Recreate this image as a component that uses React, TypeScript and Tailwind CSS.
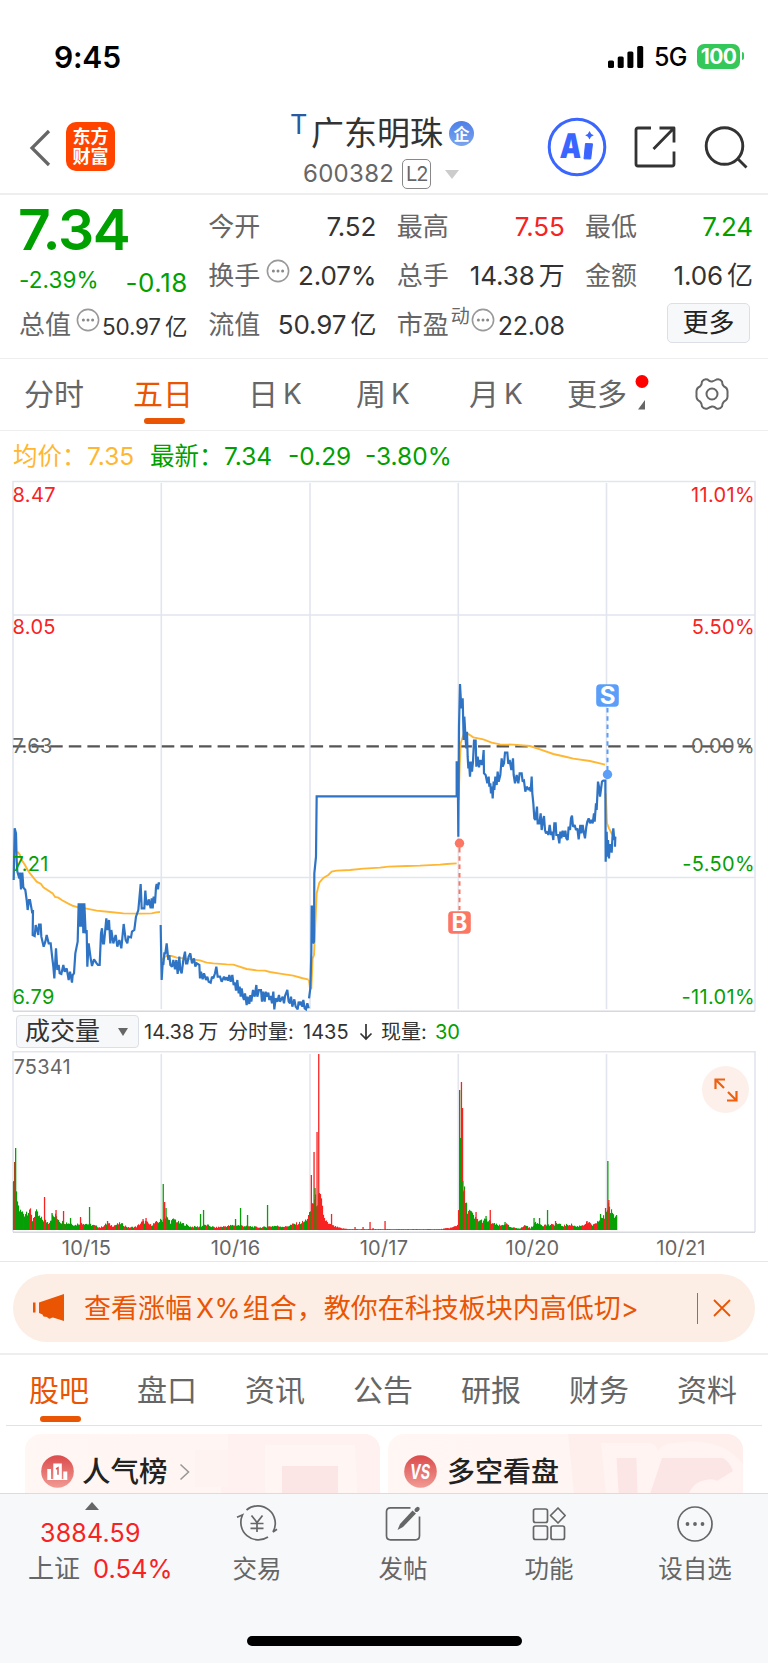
import type { ReactNode } from "react";

const BLUE = "#2f74c4";
const AMBER = "#ffb733";
const RED = "#f82222";
const GREEN = "#06a006";

// Points are kept in thirds of a pixel, relative to each series' own origin.
const priceEarly = [
  "41,240 44,85 48,100 50,180 52,215 58,235 60,218 63,268 67,218 70,262 76,270 80,300 83,330 87,300 90,300 97,340 99,330 98,405 104,408 107,375 110,385 115,405 117,374 122,374 124,410 131,440 136,425 140,405 146,430 152,430 157,475 160,500 163,535 168,445 172,510 176,495 179,520 184,522 190,495 194,515 200,505 206,540 210,515 216,548 218,525 222,520 226,460 233,425 236,310 240,380 242,310 245,380 248,310 250,400 253,310 257,400 260,390 262,500 266,430 272,475 276,498 282,478 290,490 294,495 299,495 303,400 306,385 309,430 312,430 319,355 322,390 327,360 331,430 334,390 340,430 347,405 352,440 358,420 364,445 371,372 377,420 382,430 385,410 393,412 396,395 403,390 408,350 415,330 422,252 425,325 431,325 433,325 436,272 439,310 443,315 446,298 449,310 452,325 455,295 458,325 461,290 465,310 468,262 470,252 474,268 476,250 480,250",
  "482,375 485,540 488,490 490,495 493,460 496,460 500,430 505,480 508,465 511,495 516,500 520,480 525,508 529,480 533,522 538,470 541,510 545,520 550,480 555,455 558,490 562,490 566,470 571,460 576,490 582,475 586,500 590,490 598,495 600,535 603,515 608,538 612,520 618,540 622,530 626,545 632,548 636,530 640,535 645,520 649,500 653,530 660,530 665,545 672,530 676,540 680,532 684,542 688,525 692,545 697,525 701,555 705,548 708,572 712,540 716,580 719,560 722,590 725,565 729,590 732,600 735,580 740,615 743,590 748,612 751,585 754,605 759,570 764,590 769,555 772,590 777,570 783,570 786,605 789,575 794,605 797,575 801,590 805,578 808,600 812,588 816,610 820,575 823,628 827,595 832,605 837,585 840,605 848,590 852,610 855,588 862,570 866,605 870,610 873,590 877,620 883,598 887,620 893,628 896,605 900,615 903,605 907,620 910,600 914,625 918,628 922,610 926,625",
];

const priceLate = [
  "27,1015 31,985 34,880 35,740 38,740 39,850 42,845 43,640 48,590 50,409 470,409 470,307 473,307 475,530 477,200 480,72 484,145 488,115 491,240 493,170 497,240 499,265 501,215 503,290 505,325 507,305 510,350 513,305 516,335 519,305 522,242 527,242 529,320 533,290 537,322 541,300 546,315 548,305 551,270 552,340 557,345 562,370 566,350 568,380 571,370 573,400 576,380 578,415 581,365 583,390 586,350 590,375 593,335 596,365 601,345 605,295 608,320 612,310 615,278 622,278 625,312 629,300 634,330 639,295 641,345 645,370 650,345 655,370 659,340 665,340 668,365 672,362 676,395 680,380 686,390 690,382 692,395 695,350 697,400 700,430 703,475 706,480 711,440 713,490 718,490 722,460 725,510 729,480 732,468 735,510 738,520 742,515 745,525 749,495 753,525 756,515 760,540 763,490 767,490 769,525 774,525 778,550 781,515 784,535 788,512 792,530 796,512 799,535 803,540 806,500 810,510 813,475 816,467 819,500 824,495 828,510 832,505 836,538 841,495 844,520 848,495 851,515 855,535 859,500 862,485 866,475 870,490 874,480 878,490 882,460 884,485 888,430 890,450 894,365 897,380 900,410 906,365 910,362 916,362 917,605 920,515 922,590 924,540 927,595 929,555 933,555 935,578 938,520 940,505 943,540 946,530 945,560",
];

const avgEarly = [
  "52,155 60,165 65,180 75,195 83,210 90,220 100,233 110,245 123,252 130,262 158,280 165,291 175,293 185,300 205,311 220,318 235,322 260,326 290,332 330,336 370,340 420,341 455,340 468,337 480,336",
  "487,480 492,472 500,468 515,468 530,473 560,476 600,481 620,488 640,490 680,493 700,494 740,507 770,511 795,512 810,516 840,521 880,527 905,534 926,539",
];

const avgLate = [
  "27,960 30,985 34,985 38,895 42,885 46,790 50,700 58,668 70,654 85,645 95,635 110,632 150,630 190,626 240,623 265,620 320,618 360,617 420,614 440,612 470,610",
  "476,420 479,320 482,250 490,225 505,222 520,232 550,238 575,248 600,253 640,254 690,258 720,268 760,282 800,291 820,296 870,303 915,314",
  "917,400 921,490 927,505 935,520 940,515",
];

// [x, height] of the volume outline, linearly joined between entries
const volumeShape: [number, number][] = [
  [13, 48], [17, 36], [18, 28], [20, 22], [24, 20], [29, 26], [32, 12], [35, 22], [40, 14], [48, 9], [52, 16],
  [56, 17], [60, 10], [70, 8], [75, 6], [80, 9], [84, 8], [92, 6], [100, 3], [107, 8], [112, 5], [120, 8],
  [128, 3], [136, 4], [141, 9], [145, 10], [150, 6], [158, 10], [161, 12], [166, 15], [170, 10], [174, 13],
  [178, 9], [184, 7], [190, 4], [198, 4], [206, 6], [215, 3], [228, 5], [235, 6], [252, 4], [260, 3], [274, 5],
  [285, 4], [293, 7], [298, 8], [304, 10], [309, 18], [312, 34], [320, 38], [324, 14], [328, 7], [335, 4],
  [341, 2], [350, 1], [440, 1], [452, 3], [457, 6], [459, 45], [464, 44], [466, 28], [468, 24], [471, 20],
  [474, 14], [480, 11], [486, 12], [494, 7], [500, 5], [505, 8], [510, 3], [520, 2], [525, 6], [530, 2],
  [534, 8], [539, 8], [542, 6], [552, 6], [556, 8], [562, 5], [570, 7], [576, 4], [582, 6], [587, 9],
  [592, 6], [596, 7], [600, 15], [604, 15], [606, 24], [608, 31], [610, 24], [612, 18], [617, 16],
];

const volumeSpikes: [number, number, string][] = [
  [13.5, 48, GREEN], [14.6, 68, "#a04a1c"], [15.6, 82, GREEN], [44.5, 33, RED], [52, 17, GREEN], [56, 20, RED],
  [63.5, 19, RED], [70.5, 12, GREEN], [80.5, 13, RED], [89.5, 23, GREEN], [107.5, 9, RED], [143, 11, RED], [146, 12, RED],
  [163.2, 46, GREEN], [164.6, 28, RED], [166, 22, GREEN], [200.5, 16, GREEN], [203.5, 20, GREEN],
  [235.5, 11, GREEN], [240.5, 22, GREEN], [247.5, 15, GREEN], [267.5, 25, GREEN],
  [311.3, 55, RED], [314, 78, RED], [315, 42, GREEN], [317, 98, RED], [318.7, 176, RED], [331.5, 16, RED],
  [355, 3, RED], [363, 3, RED], [370, 8, RED], [373, 2, RED], [385, 9, RED],
  [459.6, 140, GREEN], [461.4, 148, RED], [462.5, 122, RED], [460.5, 92, GREEN], [462.8, 49, GREEN], [464.2, 40, RED],
  [476, 18, RED], [486, 14, GREEN], [490.2, 20, RED], [505, 8, GREEN], [534, 12, GREEN], [539.5, 12, GREEN],
  [547.5, 20, GREEN], [555.5, 9, RED], [587, 9, RED], [600.5, 16, GREEN], [605.5, 22, RED],
  [607.8, 69, GREEN], [608.8, 30, RED], [616.5, 15, GREEN],
];

function noise(n: number) {
  const v = Math.sin(n * 12.9898) * 43758.5453;
  return v - Math.floor(v);
}

function isRed(x: number) {
  const r = noise(x + 7);
  if (x > 318 && x < 459) return true;
  if (x > 96 && x < 158) return r > 0.4;
  if (x > 190 && x < 300) return r > 0.45;
  if (x > 564 && x < 598) return r > 0.45;
  return r > 0.8;
}

const volumeBars = volumeShape.slice(1).flatMap(([x1, h1], i) => {
  const [x0, h0] = volumeShape[i];
  return Array.from({ length: x1 - x0 }, (_, k) => {
    const x = x0 + k;
    const h = h0 + ((h1 - h0) * k) / (x1 - x0);
    return { x, h: Math.max(0.8, h * (0.62 + noise(x) * 0.4)), fill: isRed(x) ? RED : GREEN };
  });
});

function Series({ lines, x, y, color, width }: { lines: string[]; x: number; y: number; color: string; width: number }) {
  return (
    <g transform={`translate(${x} ${y}) scale(0.33333)`} fill="none" stroke={color} strokeWidth={width * 3}>
      {lines.map((points) => (
        <polyline key={points} points={points} strokeLinejoin="miter" strokeMiterlimit={2} />
      ))}
    </g>
  );
}

function Dots({ className = "" }: { className?: string }) {
  return (
    <svg viewBox="0 0 24 24" className={`size-6 shrink-0 ${className}`} fill="none" stroke="#999" strokeWidth="1.6">
      <circle cx="12" cy="12" r="10.6" />
      <g fill="#888" stroke="none">
        <circle cx="7.4" cy="12" r="1.5" />
        <circle cx="12" cy="12" r="1.5" />
        <circle cx="16.6" cy="12" r="1.5" />
      </g>
    </svg>
  );
}

function StatusBar() {
  return (
    <div className="flex h-[112px] items-center justify-between pr-6 pl-[54px]">
      <span className="pt-0.5 text-[30px] leading-none font-semibold tracking-[-0.2px] text-black">9:45</span>
      <div className="flex items-center">
        <svg width="36" height="22" viewBox="0 0 36 22" className="mt-0.5 mr-[10px]">
          <rect x="0" y="14.5" width="6" height="7.5" rx="1.5" />
          <rect x="9.7" y="10.5" width="6" height="11.5" rx="1.5" />
          <rect x="19.4" y="5.5" width="6" height="16.5" rx="1.5" />
          <rect x="29.2" y="0" width="6" height="22" rx="1.5" />
        </svg>
        <span className="mr-[10px] w-[33px] pt-0.5 text-[25px] leading-none font-medium tracking-[-0.8px] text-black">5G</span>
        <span className="flex h-[25px] w-[43px] items-center justify-center rounded-[7px] bg-[#34c759] text-[21px] leading-none font-bold tracking-[-0.6px] text-white">
          100
        </span>
        <span className="ml-[1.5px] h-2 w-[2.5px] rounded-r-full bg-[#34c759]" />
      </div>
    </div>
  );
}

function TitleBar() {
  return (
    <header className="flex h-[83px] border-b-2 border-[#eeeeee]">
      <div className="flex w-[290px] items-start pt-[10px] pl-[29px]">
        <svg width="22" height="38" viewBox="0 0 22 38" className="mt-[7px]" fill="none" stroke="#666" strokeWidth="3.2">
          <path d="M20 2 3 19 20 36" />
        </svg>
        <div className="ml-[15px] flex size-[49px] flex-col items-center justify-center rounded-[10px] bg-[#ff4400] text-[18px] leading-[20px] font-bold text-white">
          <span>东方</span>
          <span>财富</span>
        </div>
      </div>
      <div className="w-[258px]">
        <div className="flex h-[42px] items-start">
          <span className="mt-px w-[21px] text-[27px] leading-[24px] text-[#2a5a9f]">T</span>
          <h1 className="text-[33px] leading-[42px] text-[#333]">广东明珠</h1>
          <span className="mt-[9px] ml-[6px] flex size-[25px] items-center justify-center rounded-full bg-linear-to-b from-[#4d7fe8] to-[#7ba4ee] text-[16px] leading-none font-bold text-white">
            企
          </span>
        </div>
        <div className="mt-[5px] flex h-[30px] items-center pl-[13px]">
          <span className="text-[24px] leading-none tracking-[0.3px] text-[#666]">600382</span>
          <span className="ml-[8px] flex h-[30px] w-[29px] items-center justify-center rounded-[5px] border-[1.5px] border-[#888] text-[20px] leading-none tracking-[-1px] text-[#666]">
            L2
          </span>
          <svg width="14" height="9" className="ml-[14px]" fill="#ccc">
            <path d="M0 0h14L7 9z" />
          </svg>
        </div>
      </div>
      <svg width="60" height="60" viewBox="0 0 60 60" className="mt-[5px] -ml-px">
        <circle cx="30" cy="30" r="27.8" fill="none" stroke="#3a66ff" strokeWidth="3" />
        <text x="12.500" y="41.500" className="text-[34px] font-black" fill="#3a66ff" textLength="21.500" lengthAdjust="spacingAndGlyphs" transform="translate(2.200) skewX(-3)">
          A
        </text>
        <path d="m38.500 26.500 7 .3-1.800 15.200-6.700-.2z" fill="#3a66ff" stroke="#3a66ff" strokeWidth="1" strokeLinejoin="round" />
        <path d="M42.500 14q1 3.300 4.300 4.300-3.300 1-4.300 4.300-1-3.300-4.300-4.300 3.300-1 4.300-4.300z" fill="#3a66ff" />
      </svg>
      <svg width="44" height="44" viewBox="0 0 44 44" className="mt-[13px] ml-[26px]" fill="none" stroke="#333" strokeWidth="2.800">
        <path d="M18 3H5q-2 0-2 2v34q0 2 2 2h34q2 0 2-2V26.500M26.500 3H41v14.500M41 3 20.500 24" strokeLinejoin="round" />
      </svg>
      <svg width="44" height="44" viewBox="0 0 44 44" className="mt-[14px] ml-[27px]" fill="none" stroke="#333" strokeWidth="2.900">
        <circle cx="20.500" cy="20" r="18.300" />
        <path d="m33 32 9.500 9.500" />
      </svg>
    </header>
  );
}

function Stat({ label, value, unit, color = "text-[#333]", hint }: { label: string; value: string; unit?: string; color?: string; hint?: boolean }) {
  return (
    <div className="flex h-[49px] items-center justify-between">
      <span className="flex items-center text-[26px] leading-none text-[#666]">
        {label}
        {hint && <Dots className="-mt-2.5 ml-[6px]" />}
      </span>
      <span className={`flex text-[26px] leading-none tracking-[-0.1px] ${color}`}>
        {value}
        {unit && <span className="ml-1">{unit}</span>}
      </span>
    </div>
  );
}

function Quote() {
  return (
    <section className="flex h-[164px] justify-between border-b border-[#eee] pt-[7px] pr-[15px] pl-5 whitespace-nowrap">
      <div className="w-[168px]">
        <div className="-ml-[2px] h-[53px] text-[57px] leading-[56px] font-semibold tracking-[-1.3px] text-[#00a000]">7.34</div>
        <div className="flex h-[45px] items-center justify-between pt-[10px] leading-none text-[#00a000]">
          <span className="-mt-1 -ml-px text-[22.500px] tracking-[0.100px]">-2.39%</span>
          <span className="text-[26px] tracking-[0.600px]">-0.18</span>
        </div>
        <div className="flex h-[49px] items-center leading-none">
          <span className="-ml-px text-[26px] text-[#666]">总值</span>
          <Dots className="-mt-2.5 ml-[5px]" />
          <span className="ml-0.5 flex pt-1.5 text-[22.500px] tracking-[-0.200px] text-[#333]">
            50.97<span className="ml-1">亿</span>
          </span>
        </div>
      </div>
      <div className="w-[168px]">
        <Stat label="今开" value="7.52" />
        <Stat label="换手" value="2.07%" hint />
        <Stat label="流值" value="50.97" unit="亿" />
      </div>
      <div className="w-[168px]">
        <Stat label="最高" value="7.55" color="text-[#f82222]" />
        <Stat label="总手" value="14.38" unit="万" />
        <div className="flex h-[49px] items-center leading-none">
          <span className="text-[26px] text-[#666]">市盈</span>
          <span className="-mt-4 ml-0.5 text-[19px] text-[#666]">动</span>
          <Dots className="-mt-2.5 ml-px" />
          <span className="ml-auto pt-1 text-[25px] tracking-[-0.300px] text-[#333]">22.08</span>
        </div>
      </div>
      <div className="w-[168px]">
        <Stat label="最低" value="7.24" color="text-[#00a000]" />
        <Stat label="金额" value="1.06" unit="亿" />
        <div className="flex justify-end pt-[3px] pr-[3px]">
          <button className="h-10 w-[83px] rounded-[5px] border border-[#dcdfe6] bg-[#f7f8fa] text-[26px] leading-none text-[#222]">更多</button>
        </div>
      </div>
    </section>
  );
}

function PeriodTabs() {
  return (
    <nav className="flex h-[72px] items-start border-b border-[#eee] pt-[18px] text-[30px] leading-[34px] whitespace-nowrap text-[#666]">
      <span className="ml-6 w-[109px]">分时</span>
      <span className="flex w-[115px] flex-col text-[#ea5504]">
        五日
        <i className="mt-[7px] ml-[11px] h-[6px] w-[41px] rounded-[3px] bg-[#ea5504]" />
      </span>
      <span className="flex w-[108px] gap-[5px]">
        日<span className="text-[28px]">K</span>
      </span>
      <span className="flex w-[113px] gap-[5px]">
        周<span className="text-[28px]">K</span>
      </span>
      <span className="flex w-[98px] gap-[5px]">
        月<span className="text-[28px]">K</span>
      </span>
      <span>更多</span>
      <svg width="17" height="40" className="-mt-[3px] ml-[8px]">
        <circle cx="7" cy="7.500" r="6.500" fill="#ff0000" />
        <path d="M3 35.500 10 26v9.500z" fill="#666" />
      </svg>
      <svg width="34" height="34" viewBox="-17 -17 34 34" className="ml-[43px]" fill="none" stroke="#666" strokeWidth="2">
        <circle r="5.500" />
        <path d="M-10-12.500Q-8-15.500-4.500-14.500-2-12 0-12.500T4.500-14.500Q8-15.500 10-12.500 10-9.500 12-7.500 16-6 15.500-1V1Q16 6 12 7.500 10 9.500 10 12.500 8 15.500 4.500 14.500 2 12 0 12.500T-4.500 14.500Q-8 15.500-10 12.500-10 9.500-12 7.500-16 6-15.500 1V-1Q-16-6-12-7.500-10-9.500-10-12.500z" />
      </svg>
    </nav>
  );
}

function Legend() {
  return (
    <div className="flex h-[49px] items-center pt-0.5 pl-[13px] text-[24.500px] leading-none whitespace-nowrap text-[#00a000]">
      <span className="w-[74px] text-[#ffb733]">均价：</span>
      <span className="w-[63px] text-[#ffb733]">7.35</span>
      <span className="w-[74px]">最新：</span>
      <span className="w-[64px]">7.34</span>
      <span className="w-[77px]">-0.29</span>
      <span>-3.80%</span>
    </div>
  );
}

const priceLabels = [
  { y: 22, price: "8.47", pct: "11.01%", fill: RED },
  { y: 154, price: "8.05", pct: "5.50%", fill: RED },
  { y: 273, price: "7.63", pct: "0.00%", fill: "#666" },
  { y: 391, price: "7.21", pct: "-5.50%", fill: GREEN },
  { y: 523.5, price: "6.79", pct: "-11.01%", fill: GREEN },
];

function PriceChart() {
  return (
    <svg width="768" height="532" viewBox="0 480 768 532" className="block text-[20px]">
      <g fill="none" stroke="#e2e5ee" strokeWidth="1.600">
        <path d="M161.300 483V1009M310 483V1009M458.300 483V1009M606.500 483V1009" />
        <path d="M13 615H755M13 877.500H755" />
        <path d="M13 1011.300V481.500H755V1011.300" />
        <path d="M13 1011.300H755" stroke="#d6d8de" />
      </g>
      <path d="M13 746.300H755" stroke="#555" strokeWidth="2.200" strokeDasharray="12.500 6.100" />
      <Series lines={avgEarly} x={0} y={800} color={AMBER} width={1.9} />
      <Series lines={avgLate} x={300} y={660} color={AMBER} width={1.9} />
      <Series lines={priceEarly} x={0} y={800} color={BLUE} width={2.2} />
      <Series lines={priceLate} x={300} y={660} color={BLUE} width={2.2} />
      {priceLabels.map((l) => (
        <g key={l.y} fill={l.fill} letterSpacing="0.350">
          <text x="12.500" y={l.y + 480}>
            {l.price}
          </text>
          <text x="755" y={l.y + 480} textAnchor="end">
            {l.pct}
          </text>
        </g>
      ))}
      <g className="text-[24px] font-bold" textAnchor="middle">
        <path d="M607.500 708V770" stroke="#5b9ef9" strokeWidth="2" strokeDasharray="4.500 3.800" />
        <circle cx="607.500" cy="774.500" r="4.700" fill="#5b9ef9" />
        <rect x="596.200" y="684.200" width="22.600" height="22.600" rx="4" fill="#5b9ef9" />
        <text x="607.500" y="704.200" fill="#fff">S</text>
        <path d="M459.500 848V910" stroke="#fb7764" strokeWidth="2" strokeDasharray="4.500 3.800" />
        <circle cx="459.500" cy="843.300" r="4.700" fill="#fb7764" />
        <rect x="448.200" y="911.200" width="22.600" height="22.600" rx="4" fill="#fb7764" />
        <text x="459.500" y="931.200" fill="#fff">B</text>
      </g>
    </svg>
  );
}

function VolumeChart() {
  return (
    <section className="relative border-b border-[#e8e8e8]">
      <div className="flex h-[39px] items-center pl-[16px] text-[20px] leading-none whitespace-nowrap text-[#333]">
        <button className="flex h-[33px] w-[123px] items-center justify-between rounded-[4px] border border-[#dcdfe6] bg-[#f7f8fa] pr-[10px] pl-[8px] text-[25px]">
          成交量
          <svg width="10" height="8" fill="#666">
            <path d="M0 0h10L5 8z" />
          </svg>
        </button>
        <span className="ml-[5px] flex w-[84px]">
          14.38<span className="ml-1">万</span>
        </span>
        <span className="w-[75px]">分时量:</span>
        <span className="w-[56px]">1435</span>
        <svg width="14" height="18" className="mr-[8px]" fill="none" stroke="#333" strokeWidth="1.700">
          <path d="M7 1v14.500M1.500 10.500 7 16l5.500-5.500" />
        </svg>
        <span className="w-[54px]">现量:</span>
        <span className="text-[#00a000]">30</span>
      </div>
      <svg width="768" height="210" viewBox="0 1051 768 210" className="block text-[20px]">
        <g fill="none" stroke="#e2e5ee" strokeWidth="1.600">
          <path d="M161.300 1054V1230M310 1054V1230M458.300 1054V1230M606.500 1054V1230" />
          <path d="M13 1232V1051.700H755V1232" />
          <path d="M13 1232.200H755" stroke="#d6d8de" />
        </g>
        {volumeBars.map((b) => (
          <rect key={b.x} x={b.x} y={1230 - b.h} width="1.100" height={b.h} fill={b.fill} />
        ))}
        {volumeSpikes.map(([x, h, fill]) => (
          <rect key={x} x={x - 0.6} y={1230 - h} width="1.300" height={h} fill={fill} />
        ))}
        <g fill="#666" letterSpacing="0.200">
          <text x="13.500" y="1074">75341</text>
          <g textAnchor="middle">
            <text x="86.500" y="1255">10/15</text>
            <text x="235.500" y="1255">10/16</text>
            <text x="384" y="1255">10/17</text>
            <text x="532.500" y="1255">10/20</text>
            <text x="681" y="1255">10/21</text>
          </g>
        </g>
      </svg>
      <button className="absolute top-[54px] right-[19px] flex size-[47px] items-center justify-center rounded-full bg-[#fdf0ea]">
        <svg width="24" height="24" fill="none" stroke="#f0600e" strokeWidth="2.200">
          <path d="M1.500 11V1.500H11M1.500 1.500l8.500 8.500M22.500 13v9.500H13M22.500 22.500 14 14" />
        </svg>
      </button>
    </section>
  );
}

function Notice() {
  return (
    <div className="h-[93px] border-b-2 border-[#eeeeee] px-[13px] pt-[12px]">
      <div className="flex h-[68px] items-center rounded-full bg-[#fdeee5] pl-[20px] text-[#ea5504]">
        <svg width="32" height="28" viewBox="0 0 32 28" fill="#ea5504">
          <path d="M0 8.500h2.500v10H0zM6 8.500 31 0v27l-11-3.500-2 .5q-1 1.500-3 0l-1-1-3.500-.5-1-2L6 19z" />
        </svg>
        <span className="ml-[19px] flex text-[27px] leading-none whitespace-nowrap">
          查看涨幅<span className="mr-[2px] ml-1 text-[26.500px] tracking-[0.300px]">X%</span>组合，教你在科技板块内高低切&gt;
        </span>
        <i className="ml-auto h-[31px] w-[1.500px] bg-[#ea5504]" />
        <svg width="18" height="18" className="mr-[24px] ml-[15px]" fill="none" stroke="#ea5504" strokeWidth="1.800">
          <path d="m1 1 16 16M17 1 1 17" />
        </svg>
      </div>
    </div>
  );
}

function SectionTabs() {
  return (
    <nav className="mx-[6px] flex h-[71px] justify-between border-b border-[#e2e2e2] pt-[17px] pr-[25px] pl-[23px] text-[30px] leading-[36px] text-[#666]">
      <span className="flex flex-col items-center text-[#ea5504]">
        股吧
        <i className="mt-[8px] ml-[2px] h-[6px] w-[41px] rounded-[3px] bg-[#ea5504]" />
      </span>
      <span>盘口</span>
      <span>资讯</span>
      <span>公告</span>
      <span>研报</span>
      <span>财务</span>
      <span>资料</span>
    </nav>
  );
}

function Cards() {
  return (
    <div className="flex h-[67px] gap-2 overflow-hidden pt-2 pl-[25px] text-[28.500px] leading-none font-medium text-[#222]">
      <div className="relative flex h-[90px] w-[355px] items-start overflow-hidden rounded-[16px] bg-linear-to-r from-[#fff7f4] to-[#fff4f1] pt-[21px] pl-4">
        <svg width="355" height="90" className="absolute top-0 left-0">
          <path d="M170 16h33V0h152v90H196V53h-26z" fill="#fef1ef" />
          <path d="M170 16h33v37h-33z" fill="#fff3f1" />
          <path d="M240 11h90l4 79h-94z" fill="#fff5f3" />
          <path d="M257 32h56v58h-56z" fill="#fce6e5" />
        </svg>
        <svg width="33" height="33" className="relative">
          <defs>
            <linearGradient id="badge" x2="0" y2="1">
              <stop stopColor="#da4b4b" />
              <stop offset="1" stopColor="#f29a94" />
            </linearGradient>
          </defs>
          <circle cx="16.500" cy="16.500" r="16.300" fill="url(#badge)" />
          <path d="M6.300 14H10v10.500H6.300zM12.300 8.500h8.500v16h-8.500zM22.300 16.500h4v8h-4zM6.300 24h20v1h-20z" fill="#fff" />
          <path d="M15 14 17 12.800v7" fill="none" stroke="#da5a58" strokeWidth="1.500" />
        </svg>
        <span className="relative ml-[8px] pt-[3px]">人气榜</span>
        <svg width="11" height="18" className="relative mt-[8px] ml-[11px]" fill="none" stroke="#999" strokeWidth="1.600">
          <path d="m1.500 1.500 8 7.500-8 7.500" />
        </svg>
      </div>
      <div className="relative flex h-[90px] w-[355px] items-start overflow-hidden rounded-[16px] bg-linear-to-r from-[#fff7f4] to-[#fff4f1] pt-[21px] pl-4">
        <svg width="355" height="90" className="absolute top-0 left-0">
          <path d="M180 0h175v90H189z" fill="#feefed" />
          <path d="M213 9h49q6 1 8 8 5-8 16-8 24-4 42 2t27 20v59H221z" fill="#fff4f2" />
          <path d="M228.500 24h20l2 66h-18zM274 24h61q7 4 10 13l-16 10q-4-3-11-1-11 1-17 13v31h-49z" fill="#fce6e5" />
        </svg>
        <svg width="33" height="33" className="relative">
          <circle cx="16.500" cy="16.500" r="16.300" fill="url(#badge)" />
          <text x="6" y="23.500" className="text-[20px] font-bold italic" textLength="20" lengthAdjust="spacingAndGlyphs" fill="#fff">
            VS
          </text>
        </svg>
        <span className="relative ml-[10px] pt-[3px] text-[28px]">多空看盘</span>
      </div>
    </div>
  );
}

function NavItem({ label, children }: { label: string; children: ReactNode }) {
  return (
    <div className="flex w-[146px] flex-col items-center text-[24.500px] leading-none text-[#666]">
      <svg width="42" height="40" viewBox="-21 -20 42 40" fill="none" stroke="#666" strokeWidth="1.700">
        {children}
      </svg>
      <span className="mt-[13px]">{label}</span>
    </div>
  );
}

function BottomBar() {
  return (
    <footer className="h-[170px] border-t border-[#dcdcde] bg-[#f7f8fa] pt-[10px]">
      <div className="flex h-[132px]">
        <div className="w-[184px] leading-none whitespace-nowrap">
          <svg width="14" height="8" className="-mt-[2px] ml-[85px]" fill="#666">
            <path d="M0 8h14L7 0z" />
          </svg>
          <div className="mt-[10px] pl-[40px] text-[25px] leading-[26px] tracking-[0.200px] text-[#f82222]">3884.59</div>
          <div className="mt-[9px] flex items-center pl-[28px] text-[26px] leading-[28px] text-[#666]">
            上证<span className="ml-[13px] text-[25.500px] text-[#f82222]">0.54%</span>
          </div>
        </div>
        <NavItem label="交易">
          <path d="M-10.500-14A17.500 17.500 0 0 1 16 8L20 5.300M11 13A17.500 17.500 0 0 1-14.500-9L-20-6.700" />
          <path d="m-5.500-8.500 5.500 7 5.500-7M0-1.500V8M-6.500-.500h13M-6.500 4.300h13" />
        </NavItem>
        <NavItem label="发帖">
          <path d="M7.500-16.200H-12.500q-4 0-4 4v24q0 4 4 4h25q4 0 4-4V-7.500" />
          <path d="m-5.500 6 2.500-6L9.500-13.500l3.500 3L0 3z" fill="#666" stroke="none" />
          <path d="m13.500-14 1.200-1.200" strokeWidth="4" strokeLinecap="round" />
        </NavItem>
        <NavItem label="功能">
          <rect x="-15.500" y="-15" width="14" height="13.500" rx="2" />
          <rect x="-15.500" y="2" width="14" height="13.500" rx="2" />
          <rect x="2" y="2" width="13.500" height="13.500" rx="2" />
          <path d="m9-16 7.200 7.500L9-1 1.500-8.500z" strokeLinejoin="round" />
        </NavItem>
        <NavItem label="设自选">
          <circle r="17" />
          <g fill="#666" stroke="none">
            <circle cx="-7.500" r="1.900" />
            <circle r="1.900" />
            <circle cx="7.500" r="1.900" />
          </g>
        </NavItem>
      </div>
      <div className="mx-auto h-[10px] w-[275px] rounded-full bg-black" />
    </footer>
  );
}

export default function App() {
  return (
    <div className="h-[1663px] w-[768px] overflow-hidden bg-white font-[Inter,'Noto_Sans_CJK_SC',sans-serif]">
      <StatusBar />
      <TitleBar />
      <Quote />
      <PeriodTabs />
      <Legend />
      <PriceChart />
      <VolumeChart />
      <Notice />
      <SectionTabs />
      <Cards />
      <BottomBar />
    </div>
  );
}
